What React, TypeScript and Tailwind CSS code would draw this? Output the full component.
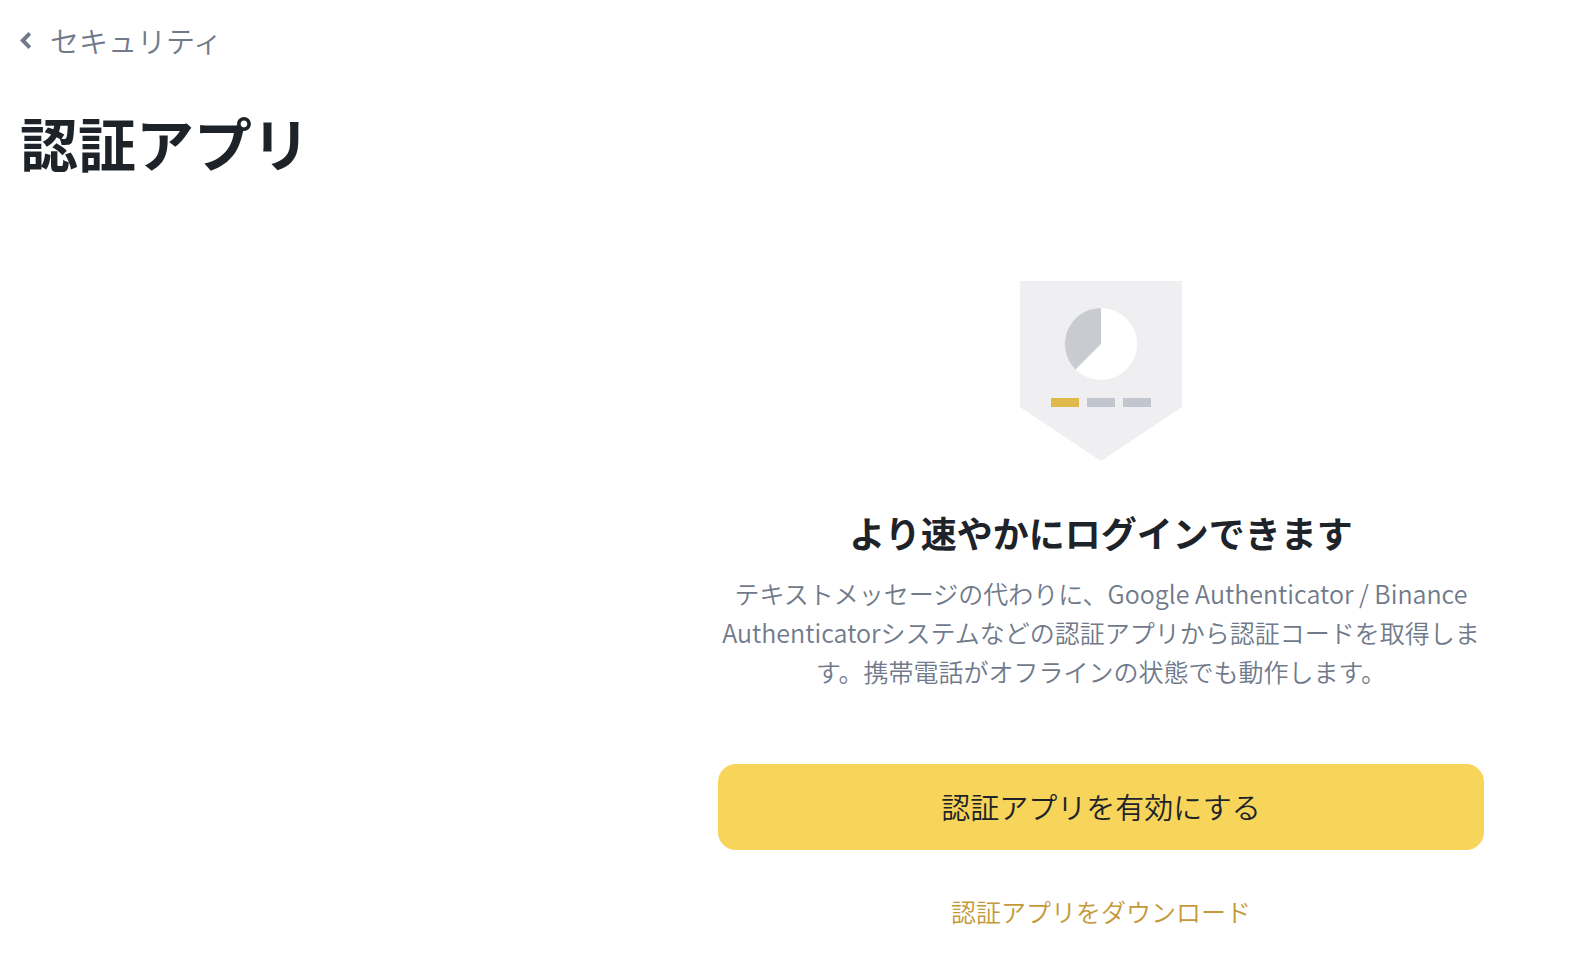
const bars = [
  { x: 31, color: '#dfba4b' },
  { x: 67, color: '#c1c5cd' },
  { x: 103, color: '#c1c5cd' },
]

function BackIcon() {
  return (
    <svg className="h-[17px] w-3" viewBox="0 0 12 17" fill="currentColor" aria-hidden="true">
      <path d="M8.4 0L0 8.5 8.4 17l2.8-2.8-5.6-5.7 5.6-5.7z" />
    </svg>
  )
}

function AuthenticatorBadge() {
  return (
    <svg className="h-[180px] w-[162px]" viewBox="0 0 162 180" aria-hidden="true">
      <path d="M0 0h162v126l-81 54-81-54z" fill="#efeff1" />
      <circle cx="81" cy="63" r="36" fill="#fff" />
      <path d="M81 63V27a36 36 0 0 0-25.5 61.5z" fill="#c8cbd0" />
      {bars.map((bar) => (
        <rect key={bar.x} x={bar.x} y="117" width="28" height="9" fill={bar.color} />
      ))}
    </svg>
  )
}

export default function App() {
  return (
    <div className="min-h-screen bg-white font-['Noto_Sans_CJK_JP',sans-serif] text-[#1e2329]">
      <header className="px-5 pt-5">
        <a href="#security" className="flex items-center gap-[18px] text-[29px] leading-10 font-[350] text-[#707a8a]">
          <BackIcon />
          セキュリティ
        </a>
        <h1 className="mt-[38px] text-[58px] leading-[88px] font-bold">認証アプリ</h1>
      </header>

      <main className="mt-[95px] mr-[100px] ml-auto flex max-w-[766px] flex-col items-center text-center">
        <AuthenticatorBadge />
        <h2 className="mt-[45px] text-[36px] leading-[52px] font-bold">より速やかにログインできます</h2>
        <p className="mt-4 text-[25px] leading-[39px] font-[350] text-[#707a8a]">
          テキストメッセージの代わりに、Google Authenticator / Binance Authenticatorシステムなどの認証アプリから認証コードを取得します。携帯電話がオフラインの状態でも動作します。
        </p>
        <button
          type="button"
          className="mt-[73px] h-[86px] w-full rounded-[18px] bg-[#f6d55a] text-[29px] font-[350]"
        >
          認証アプリを有効にする
        </button>
        <a href="#download" className="mt-[41px] text-[25px] leading-10 font-[350] text-[#c4993a]">
          認証アプリをダウンロード
        </a>
      </main>
    </div>
  )
}
